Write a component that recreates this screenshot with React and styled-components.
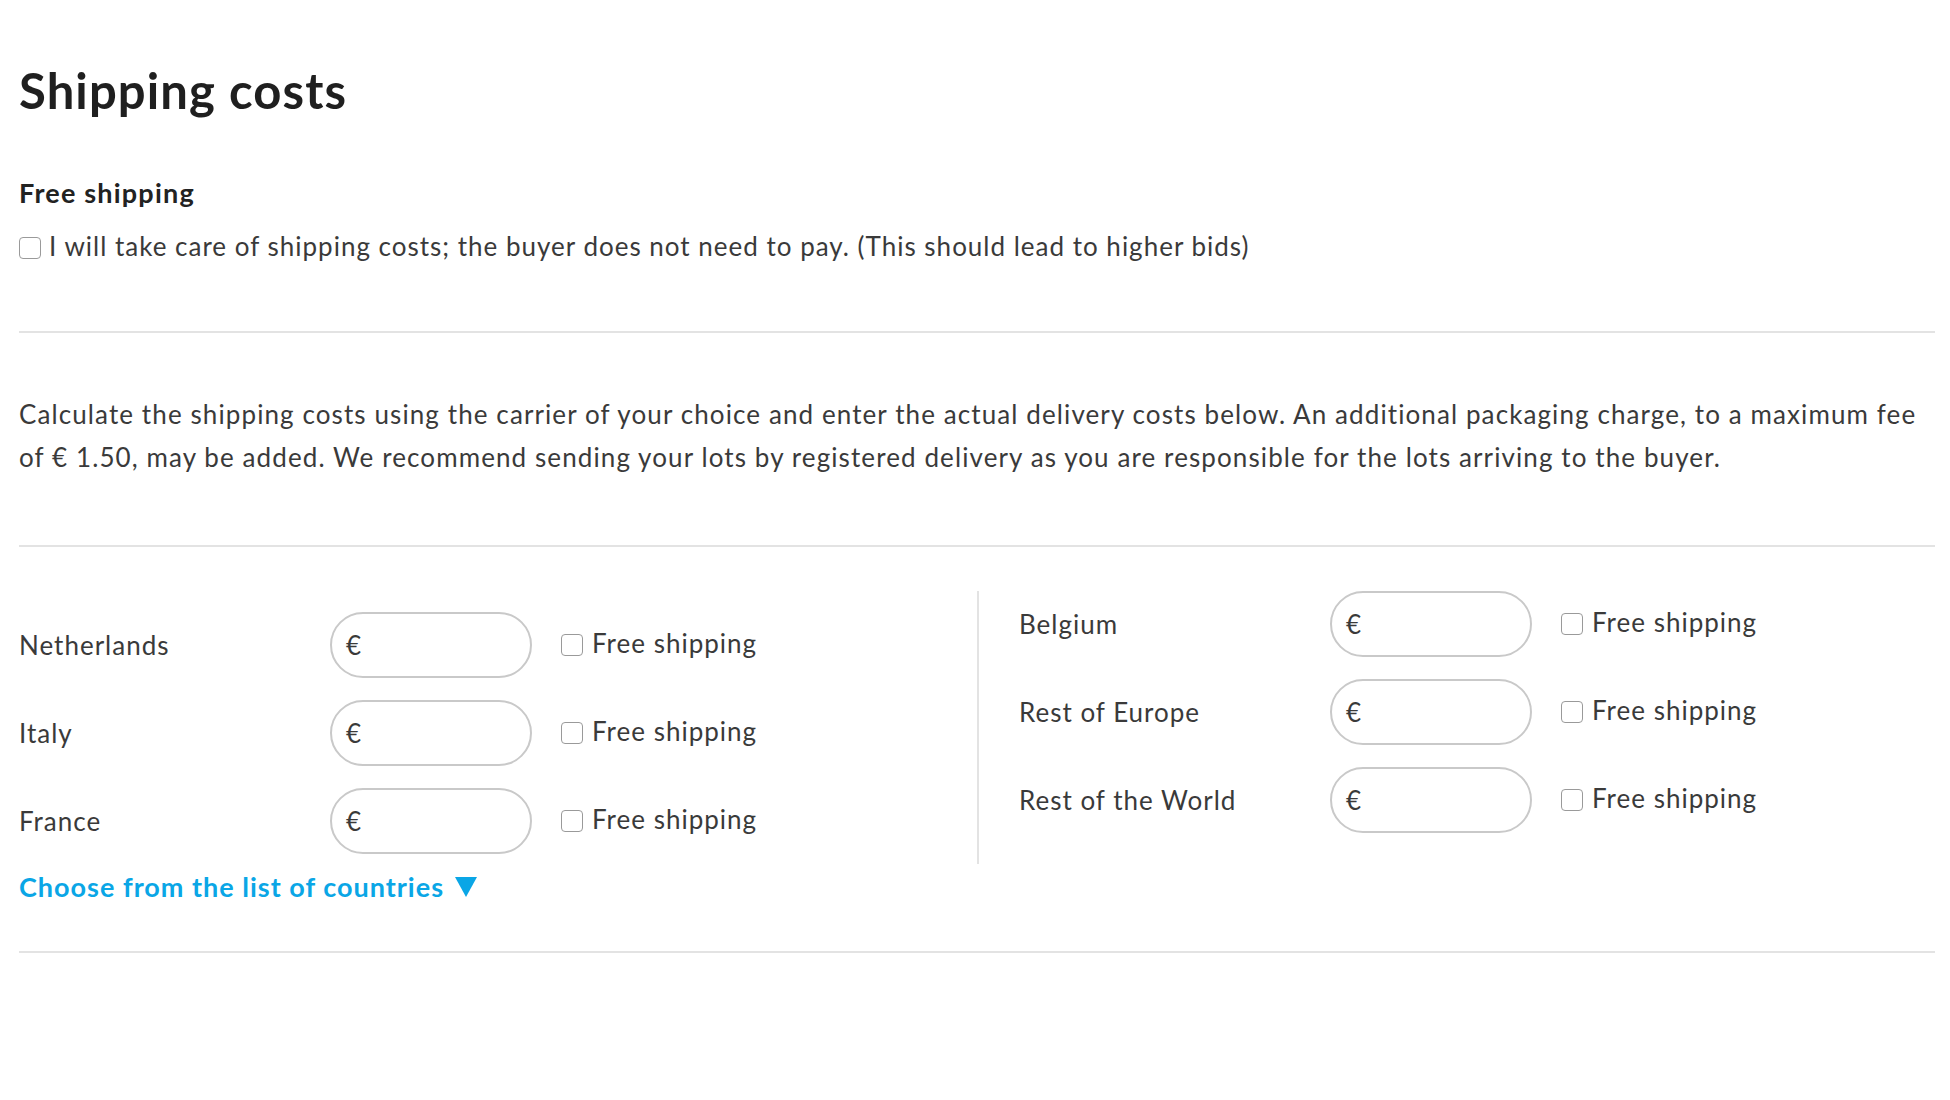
import React from 'react';
import styled, { createGlobalStyle } from 'styled-components';

const GlobalStyle = createGlobalStyle`
  body {
    margin: 0;
    background: #ffffff;
    font-family: Lato, "Liberation Sans", sans-serif;
    color: #3a3a3a;
    letter-spacing: 1px;
  }
`;

const Page = styled.div`
  padding: 60px 15px 120px 19px;
`;

const Title = styled.h1`
  margin: 0;
  font-size: 49px;
  line-height: 60px;
  font-weight: 700;
  color: #1f1f1f;
  letter-spacing: 1.1px;
`;

const SubTitle = styled.h2`
  margin: 56px 0 0;
  font-size: 27px;
  line-height: 34px;
  font-weight: 700;
  color: #222;
  letter-spacing: 1.2px;
`;

const Divider = styled.hr`
  border: none;
  border-top: 2px solid #e3e3e3;
  margin: ${p => p.$top || 0}px 0 0;
`;

const CheckLabel = styled.label`
  display: flex;
  align-items: center;
  gap: ${p => p.$gap || 9}px;
  font-size: 26px;
  line-height: 34px;
  color: #3a3a3a;
  cursor: pointer;
  white-space: nowrap;
  margin-top: ${p => p.$top || 0}px;
`;

const Box = styled.input.attrs({ type: 'checkbox' })`
  appearance: none;
  margin: 0;
  width: 22px;
  height: 22px;
  border: 1.5px solid #9a9a9a;
  border-radius: 4px;
  background: #fff;
  flex: none;
  position: relative;
  top: 2px;
`;

const Paragraph = styled.p`
  margin: 60px -30px 0 0;
  font-size: 26px;
  line-height: 43px;
  color: #3a3a3a;
  letter-spacing: 1.1px;
`;

const Countries = styled.div`
  display: grid;
  grid-template-columns: 1fr 1fr;
  margin-top: 44px;
`;

const Column = styled.div`
  display: flex;
  flex-direction: column;
  gap: 22px;
  padding-top: ${p => p.$top}px;
  padding-bottom: 10px;
  ${p => p.$divided && `
    border-left: 2px solid #e3e3e3;
    padding-left: 40px;
  `}
`;

const Row = styled.div`
  display: grid;
  grid-template-columns: 311px 202px auto;
  align-items: center;
  height: 66px;
`;

const Country = styled.span`
  font-size: 26px;
  color: #3a3a3a;
`;

const PriceField = styled.label`
  display: flex;
  align-items: center;
  height: 66px;
  box-sizing: border-box;
  border: 2px solid #c9c9c9;
  border-radius: 33px;
  padding: 0 14px;
  background: #fff;
`;

const Currency = styled.span`
  font-size: 26px;
  color: #3a3a3a;
  margin-right: 6px;
`;

const PriceInput = styled.input`
  border: none;
  outline: none;
  background: transparent;
  width: 100%;
  font: inherit;
  font-size: 26px;
  color: #333;
  padding: 0;
`;

const RowCheck = styled(CheckLabel)`
  margin-left: 29px;
  margin-top: -4px;
`;

const CountryLink = styled.a`
  display: inline-flex;
  align-items: center;
  gap: 10px;
  margin-top: 8px;
  font-size: 27px;
  line-height: 30px;
  font-weight: 700;
  color: #0aa6e6;
  text-decoration: none;
  cursor: pointer;
`;

const Triangle = () => (
  <svg width="24" height="22" viewBox="0 0 24 22">
    <path d="M1 1 L23 1 L12 21 Z" fill="#0aa6e6" />
  </svg>
);

const left = ['Netherlands', 'Italy', 'France'];
const right = ['Belgium', 'Rest of Europe', 'Rest of the World'];

const CountryRow = ({ name }) => (
  <Row>
    <Country>{name}</Country>
    <PriceField>
      <Currency>€</Currency>
      <PriceInput type="text" />
    </PriceField>
    <RowCheck>
      <Box />
      Free shipping
    </RowCheck>
  </Row>
);

export default function App() {
  return (
    <>
      <GlobalStyle />
      <Page>
        <Title>Shipping costs</Title>
        <SubTitle>Free shipping</SubTitle>
        <CheckLabel $top={19} $gap={8}>
          <Box />
          I will take care of shipping costs; the buyer does not need to pay. (This should lead to higher bids)
        </CheckLabel>
        <Divider $top={68} />
        <Paragraph>
          Calculate the shipping costs using the carrier of your choice and enter the actual delivery costs below. An additional packaging charge, to a maximum fee
          <br />
          of € 1.50, may be added. We recommend sending your lots by registered delivery as you are responsible for the lots arriving to the buyer.
        </Paragraph>
        <Divider $top={66} />
        <Countries>
          <Column $top={21}>
            {left.map(c => <CountryRow key={c} name={c} />)}
          </Column>
          <Column $top={0} $divided>
            {right.map(c => <CountryRow key={c} name={c} />)}
          </Column>
        </Countries>
        <CountryLink>
          Choose from the list of countries
          <Triangle />
        </CountryLink>
        <Divider $top={49} />
      </Page>
    </>
  );
}
